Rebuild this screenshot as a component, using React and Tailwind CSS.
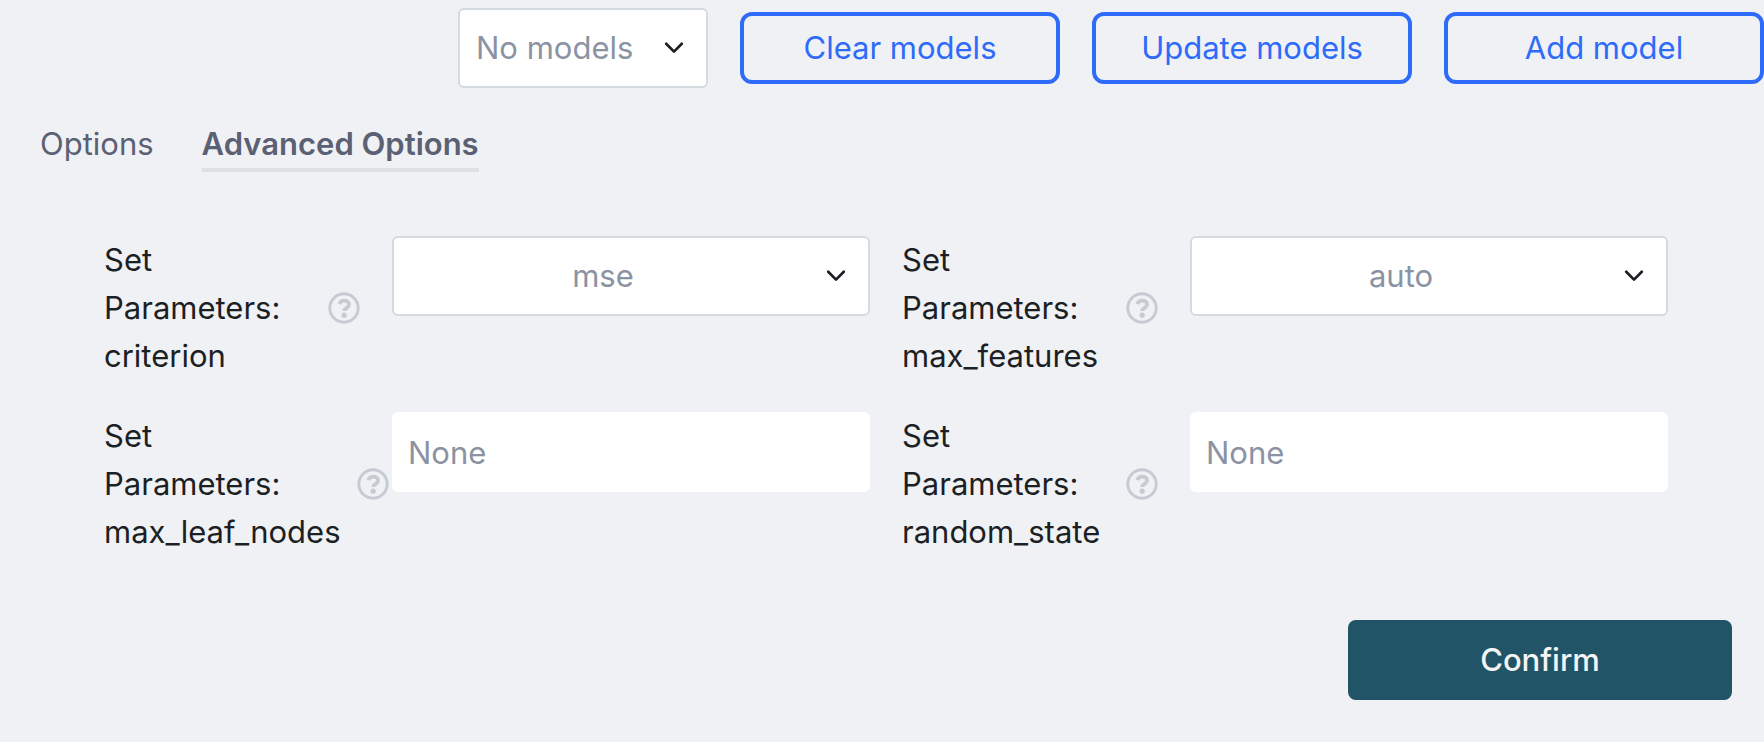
import React from "react";

function Chevron() {
  return (
    <svg
      className="pointer-events-none absolute top-6 right-5 size-7 text-[#1c1f23]"
      viewBox="0 0 28 28"
      fill="none"
      stroke="currentColor"
      strokeWidth="2.7"
      strokeLinecap="round"
      strokeLinejoin="round"
      aria-hidden="true"
    >
      <path d="M6.2 11.8 14 19.6l7.8-7.8" />
    </svg>
  );
}

function HelpIcon() {
  return (
    <svg className="size-8" viewBox="0 0 32 32" fill="none" aria-hidden="true">
      <circle cx="16" cy="16" r="14.2" stroke="currentColor" strokeWidth="2.9" />
      <path
        d="M11.4 12.1C12.1 9.8 13.8 8.7 16.2 8.7c2.9 0 4.9 1.5 4.9 3.8 0 3.4-4.8 3.2-4.8 6.5"
        stroke="currentColor"
        strokeWidth="3.8"
        strokeLinejoin="round"
      />
      <circle cx="16.1" cy="23.2" r="2.6" fill="currentColor" />
    </svg>
  );
}

function OutlineButton({ children }) {
  return (
    <button
      type="button"
      className="h-18 w-80 rounded-xl border-4 border-[#2e6bf8] text-center text-[#2e6bf8]"
    >
      {children}
    </button>
  );
}

function Field({ name, control, value }) {
  const id = "param-" + name;
  return (
    <div className="flex items-start">
      <div className="w-72 shrink-0 pr-8">
        <div className="flex items-center justify-between gap-4">
          <label htmlFor={id} className="text-[#1c1f23]">
            Set
            <br />
            Parameters:
            <br />
            {name}
          </label>
          <button type="button" aria-label={"About " + name} className="shrink-0 text-[#c6cad3]">
            <HelpIcon />
          </button>
        </div>
      </div>
      {control === "select" ? (
        <div className="relative min-w-0 flex-1">
          <select
            id={id}
            defaultValue={value}
            className="h-20 w-full appearance-none rounded-md border-2 border-[#d5dade] bg-white pr-14 text-center text-[#8b93a3]"
          >
            <option value={value}>{value}</option>
          </select>
          <Chevron />
        </div>
      ) : (
        <input
          id={id}
          type="text"
          placeholder={value}
          className="h-20 min-w-0 flex-1 rounded-md bg-white px-4 text-[#1c1f23] placeholder:text-[#8b93a3]"
        />
      )}
    </div>
  );
}

const fields = [
  { name: "criterion", control: "select", value: "mse" },
  { name: "max_features", control: "select", value: "auto" },
  { name: "max_leaf_nodes", control: "input", value: "None" },
  { name: "random_state", control: "input", value: "None" },
];

export default function App() {
  return (
    <main className="min-h-screen bg-[#eff1f5] font-['Inter',sans-serif] text-[31px] leading-12">
      <header className="flex items-center justify-end gap-8 py-2">
        <div className="relative w-[250px]">
          <select
            aria-label="Models"
            defaultValue="none"
            className="h-20 w-full appearance-none rounded-md border-2 border-[#d5dade] bg-white pl-4 text-[#8b93a3]"
          >
            <option value="none">No models</option>
          </select>
          <Chevron />
        </div>
        <OutlineButton>Clear models</OutlineButton>
        <OutlineButton>Update models</OutlineButton>
        <OutlineButton>Add model</OutlineButton>
      </header>

      <nav className="flex gap-12 px-10 pt-6 text-[#5b6072]">
        <button type="button" className="border-b-4 border-transparent">
          Options
        </button>
        <button type="button" className="border-b-4 border-[#dfe0e4] font-semibold">
          Advanced Options
        </button>
      </nav>

      <form className="pt-16" onSubmit={(e) => e.preventDefault()}>
        <div className="grid grid-cols-2 gap-8 pr-24 pl-26">
          {fields.map((f) => (
            <Field key={f.name} {...f} />
          ))}
        </div>
        <div className="flex justify-end px-8 pt-16 pb-10">
          <button
            type="submit"
            className="h-20 w-96 rounded-lg bg-[#215466] font-medium text-[#f4f4f5]"
          >
            Confirm
          </button>
        </div>
      </form>
    </main>
  );
}
